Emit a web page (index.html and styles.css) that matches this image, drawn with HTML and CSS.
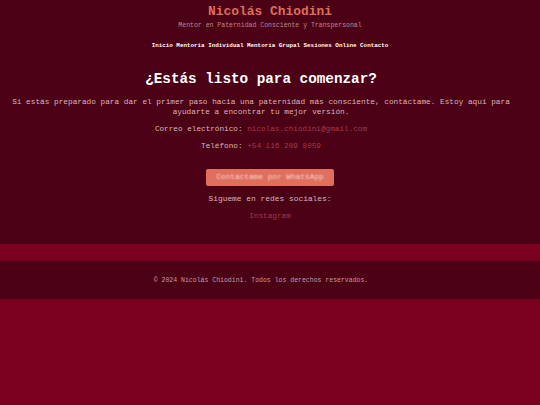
FILE: index.html
```html
<!DOCTYPE html>
<html lang="es">
<head>
<meta charset="utf-8">
<title>Nicolás Chiodini</title>
<link rel="stylesheet" href="styles.css">
</head>
<body>
<div class="page">
  <header class="site-header">
    <h1 class="brand">Nicolás Chiodini</h1>
    <p class="tagline">Mentor en Paternidad Consciente y Transpersonal</p>
    <nav class="nav">
      <a href="#">Inicio</a>
      <a href="#">Mentoria Individual</a>
      <a href="#">Mentoria Grupal</a>
      <a href="#">Sesiones Online</a>
      <a href="#">Contacto</a>
    </nav>
  </header>
  <main class="contact">
    <h2 class="contact-title">¿Estás listo para comenzar?</h2>
    <p class="intro">Si estás preparado para dar el primer paso hacia una paternidad más consciente, contáctame. Estoy aquí para ayudarte a encontrar tu mejor versión.</p>
    <p class="line">Correo electrónico: <a class="link" href="#">nicolas.chiodini@gmail.com</a></p>
    <p class="line">Teléfono: <a class="link" href="#">+54 116 209 8059</a></p>
    <a class="btn" href="#">Contáctame por WhatsApp</a>
    <p class="line social">Sigueme en redes sociales:</p>
    <p class="line insta"><a class="link" href="#">Instagram</a></p>
  </main>
</div>
<footer class="site-footer">
  <p>© 2024 Nicolás Chiodini. Todos los derechos reservados.</p>
</footer>
</body>
</html>
```

FILE: styles.css
```css
html, body {
  margin: 0;
  padding: 0;
}
body {
  background: #7b0020;
  font-family: "Liberation Mono", "Courier New", monospace;
  color: #dcb6be;
  text-align: center;
  min-height: 405px;
}
a { text-decoration: none; }
.page {
  background: #4b0015;
  padding: 4px 0 25px;
  height: 215px;
}
.brand {
  margin: 0;
  font-size: 12.9px;
  line-height: 16px;
  font-weight: bold;
  color: #df6f5f;
}
.tagline {
  margin: 0.5px 0 0;
  font-size: 6.5px;
  line-height: 9px;
  color: #c08890;
}
.nav {
  margin-top: 12.5px;
  display: flex;
  justify-content: center;
  gap: 3.5px;
  font-size: 5.9px;
  line-height: 8px;
  font-weight: bold;
}
.nav a { color: #ffffff; }
.contact {
  margin-top: 20.5px;
}
.contact-title {
  margin: 0;
  padding-right: 18px;
  font-size: 14.3px;
  line-height: 17px;
  font-weight: bold;
  color: #ffffff;
}
.intro {
  margin: 10.5px 0 0;
  padding-right: 18px;
  font-size: 7.75px;
  line-height: 9.5px;
}
.line {
  margin: 7.5px 0 0;
  padding-right: 18px;
  font-size: 7.7px;
  line-height: 9.5px;
}
.link { color: #a63a4d; }
.btn {
  display: block;
  width: 128px;
  height: 17px;
  margin: 17.5px auto 0;
  box-sizing: border-box;
  background: #e06f5e;
  border-radius: 2px;
  font-size: 7.8px;
  line-height: 17px;
  color: transparent;
  text-shadow: 0 0 1.5px rgba(255, 225, 215, 0.95);
}
.social { margin-top: 8.5px; padding-right: 0; font-size: 7.9px; }
.insta { margin-top: 8px; padding-right: 0; }
.site-footer {
  margin-top: 17px;
  background: #4b0015;
  height: 38px;
  display: flex;
  align-items: center;
  justify-content: center;
}
.site-footer p {
  margin: 0;
  padding-right: 18px;
  font-size: 6.5px;
  line-height: 9px;
  color: #c99ca2;
}
```
